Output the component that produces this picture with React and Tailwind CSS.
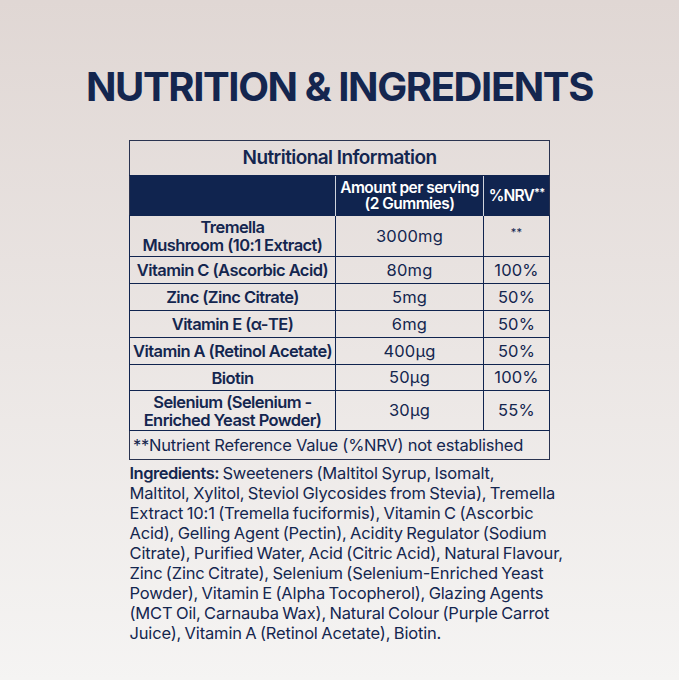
import React from 'react';

const rows = [
  { name: ['Tremella', 'Mushroom (10:1 Extract)'], amount: '3000mg', nrv: '**', h: 'h-[41px]' },
  { name: ['Vitamin C (Ascorbic Acid)'], amount: '80mg', nrv: '100%', h: 'h-[27px]' },
  { name: ['Zinc (Zinc Citrate)'], amount: '5mg', nrv: '50%', h: 'h-[27px]' },
  { name: ['Vitamin E (α-TE)'], amount: '6mg', nrv: '50%', h: 'h-[27px]' },
  { name: ['Vitamin A (Retinol Acetate)'], amount: '400µg', nrv: '50%', h: 'h-[27px]' },
  { name: ['Biotin'], amount: '50µg', nrv: '100%', h: 'h-[26px]' },
  { name: ['Selenium (Selenium\u00a0-', 'Enriched Yeast Powder)'], amount: '30µg', nrv: '55%', h: 'h-[40px]' },
];

// wrapped as on the pack
const ingredientLines = [
  'Maltitol, Xylitol, Steviol Glycosides from Stevia), Tremella',
  'Extract 10:1 (Tremella fuciformis), Vitamin C (Ascorbic',
  'Acid), Gelling Agent (Pectin), Acidity Regulator (Sodium',
  'Citrate), Purified Water, Acid (Citric Acid), Natural Flavour,',
  'Zinc (Zinc Citrate), Selenium (Selenium-Enriched Yeast',
  'Powder), Vitamin E (Alpha Tocopherol), Glazing Agents',
  '(MCT Oil, Carnauba Wax), Natural Colour (Purple Carrot',
  'Juice), Vitamin A (Retinol Acetate), Biotin.',
];

const App = () => {
  return (
    <div
      className="w-[679px] h-[680px] bg-gradient-to-b from-[#e0d7d4] to-[#f5f4f3] flex flex-col items-center text-[#14264f]"
      style={{ fontFamily: 'Inter, "Liberation Sans", sans-serif' }}
    >
      {/* Heading */}
      <h1 className="mt-[66px] text-[40px] leading-[42px] font-bold tracking-[-0.035em]">
        NUTRITION &amp; INGREDIENTS
      </h1>

      {/* Table */}
      <table className="mt-[32px] w-[420px] border-collapse border-[1.5px] border-[#2a3350] table-fixed">
        <colgroup>
          <col className="w-[206px]" />
          <col className="w-[148px]" />
          <col className="w-[66px]" />
        </colgroup>
        <tbody>
          <tr className="h-[35px]">
            <td colSpan={3} className="text-center text-[19px] font-semibold tracking-[-0.03em] border-b border-[#10244f]">
              Nutritional Information
            </td>
          </tr>
          <tr className="h-[40px] bg-[#10244f] text-white">
            <td className="border-r border-white/80" />
            <td className="border-r border-white/80 text-center text-[15.5px] leading-[16px] font-semibold tracking-[-0.035em]">
              Amount per serving
              <br />
              (2 Gummies)
            </td>
            <td className="text-center text-[15.5px] font-semibold tracking-[-0.05em] whitespace-nowrap">
              %NRV<span className="text-[11px] align-top">**</span>
            </td>
          </tr>
          {rows.map((r) => (
            <tr key={r.amount + r.nrv} className={r.h}>
              <td className="border border-[#10244f] text-center text-[16.5px] leading-[18px] font-semibold tracking-[-0.035em] whitespace-nowrap">
                {r.name.map((n, i) => (
                  <div key={i}>{n}</div>
                ))}
              </td>
              <td className="border border-[#10244f] text-center text-[16.5px] tracking-[0.01em]">{r.amount}</td>
              <td className="border border-[#10244f] text-center text-[16.5px] tracking-[0.01em]">
                {r.nrv === '**' ? <span className="text-[11px] align-top">**</span> : r.nrv}
              </td>
            </tr>
          ))}
          <tr className="h-[29px]">
            <td colSpan={3} className="px-[3px] text-[16.5px] tracking-[-0.015em] whitespace-nowrap">
              **Nutrient Reference Value (%NRV) not established
            </td>
          </tr>
        </tbody>
      </table>

      {/* Ingredients */}
      <div className="mt-[3px] w-[422px] pl-[1px] text-[16.5px] leading-[20px] tracking-[-0.01em] [word-spacing:-1px] whitespace-nowrap">
        <div>
          <span className="font-semibold tracking-[-0.03em]">Ingredients:</span> Sweeteners (Maltitol Syrup, Isomalt,
        </div>
        {ingredientLines.map((line) => (
          <div key={line}>{line}</div>
        ))}
      </div>
    </div>
  );
};

export default App;
